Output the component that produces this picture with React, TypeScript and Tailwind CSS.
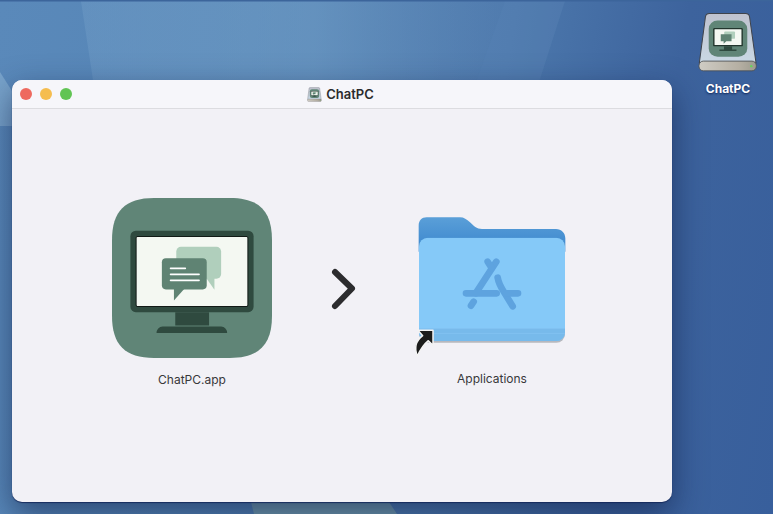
const FONT = "font-['Inter','Liberation_Sans',sans-serif]";

// app icon art, coordinates are taken off the 3x crop of the reference
function AppIcon({ className }: { className?: string }) {
  return (
    <svg viewBox="37 24 478 478" className={className}>
      <path d="M37 150C37 63 76 24 163 24H389C476 24 515 63 515 150V376C515 463 476 502 389 502H163C76 502 37 463 37 376Z" fill="#608577" />
      <rect x="92" y="122" width="368" height="243" rx="16" fill="#2f4a3f" />
      <rect x="109" y="139" width="334" height="209" rx="4" fill="#f4f8f2" stroke="#111a16" strokeWidth="3" />
      <path d="M226 365h101v40H226z" fill="#2f4a3f" />
      <path d="M170 427c0-10 8-19 18-19h175c10 0 18 9 18 19z" fill="#2f4a3f" />
      <rect x="229" y="170" width="134" height="95" rx="14" fill="#b0cfbc" />
      <path d="M318 262h25v36z" fill="#b0cfbc" />
      <rect x="186" y="204" width="134" height="93" rx="12" fill="#5f8373" />
      <path d="M222 290h36l-36 40z" fill="#5f8373" />
      <path d="M212 234h44M212 252h85M212 270h85" stroke="#fff" strokeWidth="5" strokeLinecap="round" />
    </svg>
  );
}

function Drive({ className }: { className?: string }) {
  return (
    <svg viewBox="55 35 185 182" className={className}>
      <defs>
        <linearGradient id="driveBody" x1="0" y1="0" x2="0" y2="1">
          <stop offset="0" stopColor="#bfc2ce" />
          <stop offset="1" stopColor="#c9d8e4" />
        </linearGradient>
        <linearGradient id="driveBase" x1="0" y1="0" x2="1" y2="0">
          <stop offset="0" stopColor="#cfccc4" />
          <stop offset="0.7" stopColor="#b5afa3" />
          <stop offset="1" stopColor="#9c9a8e" />
        </linearGradient>
      </defs>
      <path d="M92 41h108c7 0 11 4 12 11l19 136H62L80 52c1-7 5-11 12-11z" fill="url(#driveBody)" stroke="#3f434b" strokeWidth="3" />
      <g transform="translate(90 62) scale(0.2406 0.2259) translate(-37 -24)">
        <rect x="37" y="24" width="478" height="478" rx="110" fill="#608577" />
        <rect x="92" y="122" width="368" height="243" rx="16" fill="#22352d" />
        <rect x="109" y="139" width="334" height="209" rx="4" fill="#f4f8f2" />
        <path d="M226 365h101v40H226zM170 408h211v19H170z" fill="#2f4a3f" />
        <rect x="229" y="170" width="134" height="95" rx="12" fill="#b0cfbc" />
        <path d="M186 204h134v93h-65l-33 33v-33h-36z" fill="#5f8373" />
      </g>
      <rect x="61" y="183" width="171" height="29" rx="13" fill="url(#driveBase)" stroke="#4c4f53" strokeWidth="2.5" />
      <circle cx="217" cy="198" r="3.5" fill="#63d35a" />
    </svg>
  );
}

function AppsFolder({ className }: { className?: string }) {
  return (
    <svg viewBox="0 0 540 555" className={className}>
      <defs>
        <linearGradient id="folderBack" x1="0" y1="0" x2="0" y2="1">
          <stop offset="0" stopColor="#5a9fd8" />
          <stop offset="1" stopColor="#3a85cd" />
        </linearGradient>
        <clipPath id="folderClip">
          <rect x="57" y="98" width="438" height="310" rx="26" />
        </clipPath>
      </defs>
      <path d="M56 62c0-15 9-25 24-25h100c12 0 20 6 30 15 11 11 20 20 36 20h222c16 0 28 12 28 28v40H56z" fill="url(#folderBack)" />
      <rect x="57" y="100" width="438" height="313" rx="26" fill="#6e7379" opacity="0.45" />
      <g clipPath="url(#folderClip)">
        <rect x="57" y="98" width="438" height="310" fill="#85c9f8" />
        <rect x="57" y="370" width="438" height="38" fill="#77baeb" />
        <path d="M57 371h438M57 385h438" stroke="#88c6f4" strokeWidth="2" />
      </g>
      <g stroke="#5ea3df" strokeWidth="20" strokeLinecap="round" fill="none">
        <path d="M289 170l-62 95" />
        <path d="M263 170l12 19" />
        <path d="M293 218c3 17 10 29 17 40l28 46" />
        <path d="M198 265h92M318 265h36" />
        <path d="M213 302l8-12" />
      </g>
      {/* alias arrow */}
      <path d="M54 376H99V421L85 407C74 416 62 432 52 453C41 426 47 408 68 392Z" fill="#1c1c1c" stroke="#f4f4f4" strokeWidth="4.5" strokeLinejoin="round" />
    </svg>
  );
}

function Wallpaper() {
  return (
    <svg viewBox="0 0 773 514" className="absolute inset-0 h-full w-full">
      <defs>
        <linearGradient id="sheet" x1="0" y1="0" x2="1" y2="0">
          <stop offset="0" stopColor="#7ba6cd" stopOpacity="0.3" />
          <stop offset="0.55" stopColor="#75a1c8" stopOpacity="0.5" />
          <stop offset="1" stopColor="#5c84b4" stopOpacity="0.25" />
        </linearGradient>
      </defs>
      <path d="M81 1h424l-45 125H100z" fill="url(#sheet)" />
      <path d="M505 1h60l-40 125h-65z" fill="#6a93bf" opacity="0.22" />
      <path d="M0 72l34 54H0z" fill="#8cb4d6" opacity="0.6" />
      <path d="M251 502h138l8 12H254z" fill="#7ba2ad" opacity="0.8" />
      <path d="M0 0h773v1.5H0z" fill="#3c659b" />
    </svg>
  );
}

export default function App() {
  return (
    <div className={`relative h-[514px] w-[773px] overflow-hidden bg-[linear-gradient(100deg,#5a89ba_0%,#5585b6_30%,#4c78ac_60%,#3d639d_80%,#385f9c_100%)] ${FONT}`}>
      <Wallpaper />

      {/* desktop disk icon */}
      <div className="absolute left-[688px] top-[11px] flex w-[80px] flex-col items-center">
        <Drive className="h-[62px] w-[62px]" />
        <span className="mt-[8px] text-[12px] font-bold leading-[15px] text-white [text-shadow:0_1px_2px_rgba(10,30,80,0.9)]">
          ChatPC
        </span>
      </div>

      {/* installer window */}
      <div className="absolute left-[12px] top-[80px] flex h-[422px] w-[660px] flex-col overflow-hidden rounded-[10px] bg-[#f2f1f6] shadow-[0_1px_1px_rgba(20,40,90,0.9),0_12px_32px_rgba(15,30,70,0.6)]">
        <div className="grid h-[29px] shrink-0 grid-cols-[1fr_auto_1fr] items-center border-b border-[#dcdce0] bg-[#f6f6fa] pl-[8px]">
          <div className="flex gap-[8px]">
            <span className="h-[12px] w-[12px] rounded-full bg-[#ee6a5f]" />
            <span className="h-[12px] w-[12px] rounded-full bg-[#f5bd4f]" />
            <span className="h-[12px] w-[12px] rounded-full bg-[#61c454]" />
          </div>
          <div className="flex items-center gap-[4px] pr-[11px]">
            <Drive className="h-[15px] w-[15px]" />
            <span className="text-[13px] font-semibold leading-none text-[#2b2b2d]">ChatPC</span>
          </div>
          <div />
        </div>

        <div className="flex items-start pl-[100px] pt-[89px]">
          <div className="flex w-[160px] flex-col items-center">
            <AppIcon className="h-[160px] w-[160px]" />
            <span className="mt-[14px] text-[12px] leading-[15px] text-[#38383a]">ChatPC.app</span>
          </div>

          <svg viewBox="0 0 30 46" className="ml-[57px] mt-[68px] h-[46px] w-[30px] shrink-0">
            <path d="M6 6l17 16.5L6 40" fill="none" stroke="#2c2c2e" strokeWidth="6" strokeLinecap="round" strokeLinejoin="round" />
          </svg>

          <div className="ml-[41px] mt-[7px] flex w-[180px] flex-col items-center">
            <AppsFolder className="h-[185px] w-[180px]" />
          </div>
        </div>
        <span className="absolute left-[445px] top-[291px] text-[12px] leading-[15px] text-[#38383a]">
          Applications
        </span>
      </div>
    </div>
  );
}
